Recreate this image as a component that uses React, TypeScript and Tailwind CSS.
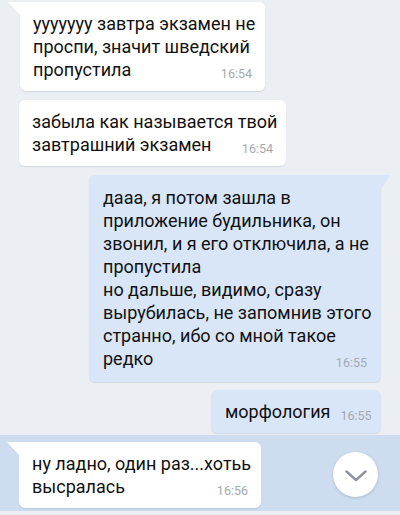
import React from "react";

type Msg = {
  lines: string[];
  time: string;
  width: string;
};

function IncomingTail() {
  return (
    <svg
      className="absolute left-[-12px] top-0"
      width="13"
      height="14"
      viewBox="0 0 13 14"
    >
      <polygon points="0,0 13,0 13,14" fill="#ffffff" />
    </svg>
  );
}

function OutgoingTail() {
  return (
    <svg
      className="absolute right-[-11px] top-0"
      width="12"
      height="15"
      viewBox="0 0 12 15"
    >
      <polygon points="0,0 11,0 0,15" fill="#d8e6f8" />
    </svg>
  );
}

function Body({ lines, time }: { lines: string[]; time: string }) {
  const last = lines.length - 1;
  return (
    <>
      {lines.map((line, i) =>
        i === last ? (
          <div key={i} className="flex items-end justify-between whitespace-nowrap">
            <span>{line}</span>
            <span className="ml-[10px] text-[12.5px] leading-[14px] text-[#a3a9b1]">
              {time}
            </span>
          </div>
        ) : (
          <div key={i} className="whitespace-nowrap">
            {line}
          </div>
        )
      )}
    </>
  );
}

function Incoming({ msg, tail, className }: { msg: Msg; tail?: boolean; className?: string }) {
  return (
    <div
      className={`relative rounded-[6px] bg-white pl-[13px] pr-[13px] py-[10px] shadow-[0_1px_1px_rgba(110,130,155,0.22)] ${msg.width} ${tail ? "rounded-tl-none" : ""} ${className ?? ""}`}
    >
      {tail && <IncomingTail />}
      <Body lines={msg.lines} time={msg.time} />
    </div>
  );
}

function Outgoing({ msg, tail, className }: { msg: Msg; tail?: boolean; className?: string }) {
  return (
    <div
      className={`relative rounded-[6px] bg-[#d8e6f8] pl-[14px] pr-[14px] shadow-[0_1px_1px_rgba(110,130,155,0.22)] ${msg.width} ${tail ? "rounded-tr-none" : ""} ${className ?? ""}`}
    >
      {tail && <OutgoingTail />}
      <Body lines={msg.lines} time={msg.time} />
    </div>
  );
}

export default function App() {
  const first: Msg = {
    lines: ["ууууууу завтра экзамен не", "проспи, значит шведский", "пропустила"],
    time: "16:54",
    width: "w-[245px]",
  };
  const second: Msg = {
    lines: ["забыла как называется твой", "завтрашний экзамен"],
    time: "16:54",
    width: "w-[267px]",
  };
  const reply: Msg = {
    lines: [
      "дааа, я потом зашла в",
      "приложение будильника, он",
      "звонил, и я его отключила, а не",
      "пропустила",
      "но дальше, видимо, сразу",
      "вырубилась, не запомнив этого",
      "странно, ибо со мной такое",
      "редко",
    ],
    time: "16:55",
    width: "w-[292px]",
  };
  const word: Msg = {
    lines: ["морфология"],
    time: "16:55",
    width: "w-[170px]",
  };
  const last: Msg = {
    lines: ["ну ладно, один раз...хотьь", "высралась"],
    time: "16:56",
    width: "w-[242px]",
  };

  return (
    <div className="flex h-[515px] w-[400px] flex-col overflow-hidden bg-[#ebeff3] font-['Roboto',sans-serif] text-[18px] leading-[23px] text-[#111]">
      <div className="pl-[20px] pt-[2px]">
        <Incoming msg={first} tail />
      </div>
      <div className="mt-[9px] pl-[19px]">
        <Incoming msg={second} />
      </div>
      <div className="mt-[9px] flex justify-end pr-[19px]">
        <Outgoing msg={reply} tail className="pt-[11px] pb-[12px]" />
      </div>
      <div className="mt-[8px] flex justify-end pr-[19px]">
        <Outgoing msg={word} className="py-[10px]" />
      </div>
      <div className="relative mt-[2px] bg-[#cddcee] pb-[3px] pl-[19px] pt-[7px]">
        <Incoming msg={last} tail />
        <div className="absolute left-[333px] top-[17px] flex h-[45px] w-[45px] items-center justify-center rounded-full bg-white shadow-[0_1px_3px_rgba(60,80,110,0.25)]">
          <svg width="22" height="12" viewBox="0 0 22 12" className="mt-[3px]">
            <polyline
              points="1.5,1.5 11,10 20.5,1.5"
              fill="none"
              stroke="#8b95a2"
              strokeWidth="2.4"
              strokeLinecap="round"
              strokeLinejoin="round"
            />
          </svg>
        </div>
      </div>
    </div>
  );
}
